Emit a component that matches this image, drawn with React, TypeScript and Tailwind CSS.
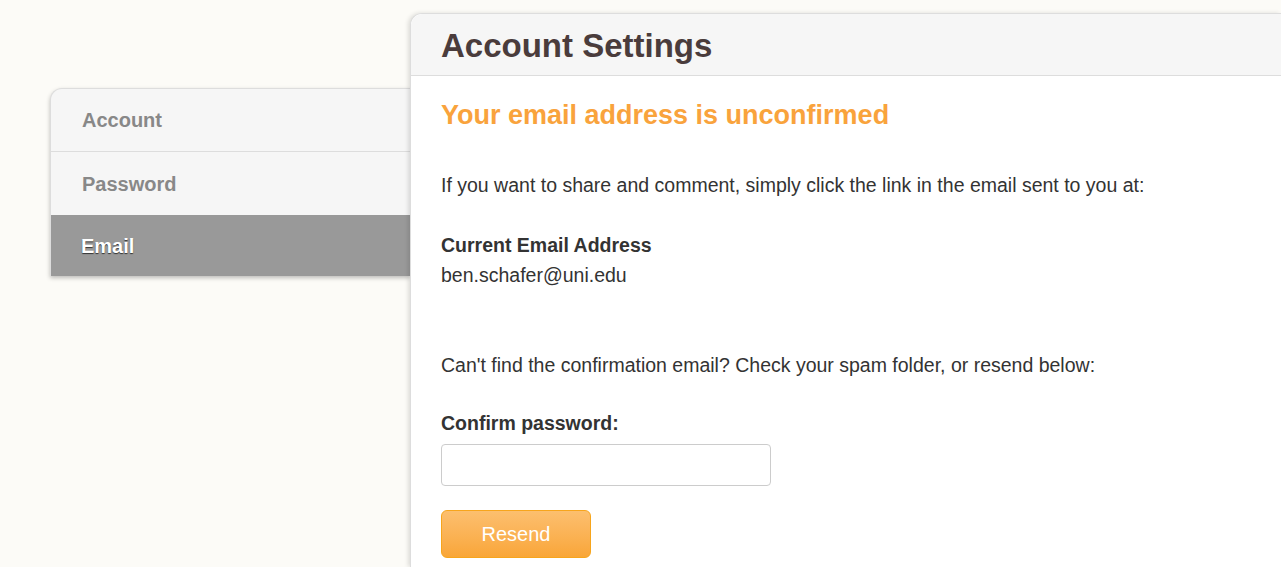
const navItems = [
  { label: "Account", active: false },
  { label: "Password", active: false },
  { label: "Email", active: true },
]

export default function App() {
  return (
    <div
      className="flex h-[567px] w-full overflow-hidden bg-[#fcfbf7] pt-[13px] pl-[50px] text-[#333]"
      style={{ fontFamily: '"Liberation Sans", Arial, sans-serif' }}
    >
      {/* Side nav */}
      <div className="mt-[75px] w-[360px] shrink-0 self-start">
        <div className="overflow-hidden rounded-tl-[12px] border-t border-l border-[#ddd] bg-[#f6f6f6] shadow-[0_2px_4px_rgba(0,0,0,0.25)]">
          {navItems.map((item, i) => (
            <div
              key={item.label}
              className={
                item.active
                  ? "flex h-[61px] items-center bg-[#999] pl-[30px] text-[20px] font-bold text-white [text-shadow:0_1px_1px_#333]"
                  : "flex h-[63px] items-center pl-[31px] text-[20px] font-bold text-[#888] " +
                    (i === 0 ? "border-b border-[#ddd]" : "")
              }
            >
              {item.label}
            </div>
          ))}
        </div>
      </div>

      {/* Main panel */}
      <div className="relative flex-1 rounded-tl-[12px] border-t border-l border-[#ddd] bg-white shadow-[-2px_0_4px_rgba(0,0,0,0.12)]">
        <div className="flex h-[62px] items-center rounded-tl-[12px] border-b border-[#ddd] bg-[#f6f6f6] pt-[3px] pl-[30px]">
          <h1 className="text-[33px] leading-[38px] font-bold text-[#4a3c3c]">Account Settings</h1>
        </div>
        <div className="pl-[30px] text-[19.5px] leading-[24px]">
          <h2 className="mt-[24px] text-[27px] leading-[30px] font-bold text-[#f9a33c]">
            Your email address is unconfirmed
          </h2>
          <p className="mt-[43px]">
            If you want to share and comment, simply click the link in the email sent to you at:
          </p>
          <p className="mt-[36px] font-bold">Current Email Address</p>
          <p className="mt-[6px]">ben.schafer@uni.edu</p>
          <p className="mt-[66px]">
            Can't find the confirmation email? Check your spam folder, or resend below:
          </p>
          <p className="mt-[34px] font-bold">Confirm password:</p>
          <input
            type="password"
            className="mt-[9px] block h-[42px] w-[330px] rounded-[4px] border border-[#ccc] bg-white"
          />
          <button className="mt-[24px] flex h-[48px] w-[150px] items-center justify-center rounded-[6px] border border-[#f7a51c] bg-gradient-to-b from-[#fcbf6e] to-[#f9a637] text-[20px] text-white">
            Resend
          </button>
        </div>
      </div>
    </div>
  )
}
